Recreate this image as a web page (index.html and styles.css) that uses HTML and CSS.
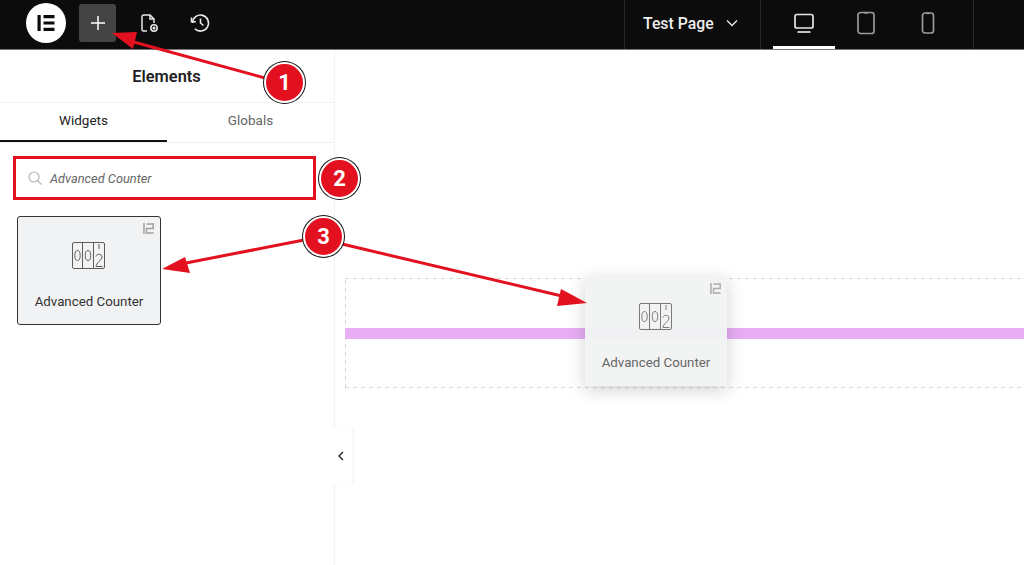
FILE: index.html
```html
<!DOCTYPE html>
<html lang="en">
<head>
<meta charset="utf-8">
<title>Elementor editor</title>
<link rel="stylesheet" href="styles.css">
</head>
<body>
<div class="app">
  <header class="topbar">
    <div class="tools">
      <div class="logo">
        <svg width="20" height="20" viewBox="0 0 20 20"><path d="M1.5 2h3.2v16H1.500zM7.500 2h11v3.200h-11zM7.500 8.400h11v3.200h-11zM7.500 14.800h11V18h-11z" fill="#0c0c0c"/></svg>
      </div>
      <div class="tool tool-active">
        <svg width="18" height="18" viewBox="0 0 18 18"><path d="M9 2v14M2 9h14" stroke="#fff" stroke-width="1.500" fill="none"/></svg>
      </div>
      <div class="tool">
        <svg width="22" height="22" viewBox="0 0 22 22" fill="none" stroke="#e8e8e8" stroke-width="1.500"><path d="M9 19H5.500A1.500 1.500 0 0 1 4 17.500v-13A1.500 1.500 0 0 1 5.500 3H12l4 4v4"/><path d="M12 3v4h4"/><circle cx="16" cy="16" r="3.200"/><circle cx="16" cy="16" r=".8" fill="#e8e8e8"/></svg>
      </div>
      <div class="tool">
        <svg width="22" height="22" viewBox="0 0 22 22" fill="none" stroke="#e8e8e8" stroke-width="1.600"><path d="M3.500 11a8 8 0 1 1 2.300 5.700"/><path d="M2.500 5.500v4.300h4.300"/><path d="M11.500 6.500V11l3 2.500"/></svg>
      </div>
    </div>
    <div class="page-name">
      <span>Test Page</span>
      <svg width="14" height="14" viewBox="0 0 14 14" fill="none" stroke="#e8e8e8" stroke-width="1.400"><path d="M2 4.500 7 9.500l5-5"/></svg>
    </div>
    <div class="devices">
      <div class="device device-active">
        <svg width="22" height="22" viewBox="0 0 22 22" fill="none" stroke="#e8e8e8" stroke-width="1.700"><rect x="2" y="2.500" width="18" height="13.500" rx="1.800"/><path d="M4.500 20h13"/></svg>
      </div>
      <div class="device">
        <svg width="20" height="24" viewBox="0 0 20 24" fill="none" stroke="#9a9a9a" stroke-width="1.700"><rect x="2" y="1.500" width="16" height="21" rx="2.500"/><path d="M8 1.800h4"/></svg>
      </div>
      <div class="device">
        <svg width="16" height="22" viewBox="0 0 16 22" fill="none" stroke="#9a9a9a" stroke-width="1.700"><rect x="2.500" y="1" width="11" height="20" rx="2.500"/><path d="M6.500 1.300h3"/></svg>
      </div>
    </div>
    <div class="bar-end"></div>
  </header>
  <div class="workspace">
    <aside class="panel">
      <h1 class="panel-title">Elements</h1>
      <nav class="tabs">
        <div class="tab tab-active">Widgets</div>
        <div class="tab">Globals</div>
      </nav>
      <div class="search">
        <svg width="16" height="16" viewBox="0 0 16 16" fill="none" stroke="#b5b5b5" stroke-width="1.200"><circle cx="7" cy="7" r="5"/><path d="m10.800 10.800 3.700 3.700"/></svg>
        <span>Advanced Counter</span>
      </div>
      <div class="widget-grid">
        <div class="widget widget-picked">
          <svg class="pro" width="11" height="11" viewBox="0 0 11 11" fill="none" stroke="#a0a0a0" stroke-width="1.500"><path d="M1 0v11M3.500 1h6.700v4.500H3.500V10h7"/></svg>
          <svg class="counter" width="34" height="30" viewBox="0 0 34 30" fill="none" stroke="#5c5c5c" stroke-width="1"><rect x=".5" y="1.500" width="32" height="26" rx="1.500"/><path d="M10.500 1.500v26M21.500 1.500v26"/><ellipse cx="5.500" cy="14.500" rx="2.700" ry="5"/><ellipse cx="16" cy="14.500" rx="2.700" ry="5"/><path d="M27 3v5M24 15.500c.5-3 6-3 6 .5 0 3-6 6-6 9.500h6.500"/></svg>
          <div class="widget-label">Advanced Counter</div>
        </div>
      </div>
    </aside>
    <main class="canvas">
      <button class="collapse" type="button" aria-label="Collapse">
        <svg width="8" height="12" viewBox="0 0 8 12" fill="none" stroke="#333" stroke-width="1.500"><path d="M6 2 2 6l4 4"/></svg>
      </button>
      <section class="dropzone">
        <div class="dropline"></div>
      </section>
      <div class="widget ghost">
        <svg class="pro" width="11" height="11" viewBox="0 0 11 11" fill="none" stroke="#ababab" stroke-width="1.500"><path d="M1 0v11M3.500 1h6.700v4.500H3.500V10h7"/></svg>
        <svg class="counter" width="34" height="30" viewBox="0 0 34 30" fill="none" stroke="#7a7a7a" stroke-width="1"><rect x=".5" y="1.500" width="32" height="26" rx="1.500"/><path d="M10.500 1.500v26M21.500 1.500v26"/><ellipse cx="5.500" cy="14.500" rx="2.700" ry="5"/><ellipse cx="16" cy="14.500" rx="2.700" ry="5"/><path d="M27 3v5M24 15.500c.5-3 6-3 6 .5 0 3-6 6-6 9.500h6.500"/></svg>
        <div class="widget-label">Advanced Counter</div>
      </div>
    </main>
  </div>
  <svg class="arrows" width="1024" height="565" viewBox="0 0 1024 565" fill="none">
    <g stroke="#e3101f" stroke-width="3">
      <path d="M265 78 130 41"/>
      <path d="M304 240 186 263"/>
      <path d="M342 244 566 297"/>
    </g>
    <g fill="#e3101f">
      <path d="M112 33 137 32 133 49z"/>
      <path d="M162 269 185 257 190 273z"/>
      <path d="M587 303 561 289 557 306z"/>
    </g>
  </svg>
  <div class="badge badge-one">1</div>
  <div class="badge badge-two">2</div>
  <div class="badge badge-three">3</div>
</div>
</body>
</html>
```

FILE: styles.css
```css
* { box-sizing: border-box; }
html, body { margin: 0; height: 100%; overflow: hidden; background: #fff; }
body { font-family: Roboto, "Liberation Sans", sans-serif; color: #1f1f1f; }
.app { position: relative; width: 1024px; height: 565px; display: flex; flex-direction: column; }

.topbar { height: 50px; flex: none; display: flex; background: #0c0c0c; border-bottom: 1px solid #777; }
.tools { width: 624px; display: flex; align-items: center; padding: 0 0 3px 26px; }
.logo { width: 40px; height: 40px; border-radius: 50%; background: #fff; display: flex; align-items: center; justify-content: center; margin-right: 13px; }
.tool { width: 37px; height: 38px; border-radius: 3px; display: flex; align-items: center; justify-content: center; margin-right: 14px; }
.tool-active { background: #444; }
.page-name { width: 136px; display: flex; align-items: center; gap: 11px; padding: 0 0 3px 18px; border-left: 1px solid #2a2a2a; font-size: 15.800px; font-weight: 500; color: #eee; }
.devices { width: 214px; display: flex; align-items: stretch; padding-left: 12px; border-left: 1px solid #2a2a2a; border-right: 1px solid #2a2a2a; }
.device { width: 62px; display: flex; align-items: center; justify-content: center; padding-bottom: 1px; border-bottom: 3px solid transparent; }
.device-active { border-bottom-color: #fff; }
.bar-end { flex: 1; }

.workspace { flex: 1; display: flex; min-height: 0; }
.panel { width: 335px; flex: none; border-right: 1px solid #f2f2f2; }
.panel-title { margin: 0; height: 52px; padding-right: 1px; display: flex; align-items: center; justify-content: center; font-size: 16.400px; font-weight: 600; color: #222; }
.tabs { display: flex; height: 41px; border-top: 1px solid #f2f2f2; border-bottom: 1px solid #f0f0f0; }
.tab { flex: 1; display: flex; align-items: center; justify-content: center; padding-bottom: 6px; font-size: 13.500px; color: #666; }
.tab-active { color: #222; border-bottom: 2px solid #111; padding-bottom: 4px; }
.search { display: flex; align-items: center; gap: 7px; height: 44px; margin: 13px 18px 16px 13px; padding-left: 11px; border: 3px solid #e3101f; font-size: 12.800px; font-style: italic; color: #666; }
.search svg { flex: none; }
.widget-grid { padding-left: 17px; }
.widget { position: relative; width: 144px; height: 109px; display: flex; flex-direction: column; align-items: center; border-radius: 3px; background: #f1f2f3; }
.widget-picked { border: 1px solid #333; padding-top: 24px; }
.pro { position: absolute; top: 6px; right: 6px; }
.counter { flex: none; }
.widget-label { margin-top: 23px; font-size: 13.300px; color: #333; }

.canvas { position: relative; flex: 1; padding: 228px 0 0 10px; }
.dropzone { height: 110px; padding: 50px 0 0; background-image:
  repeating-linear-gradient(90deg, #d6d6d6 0 4px, transparent 4px 8px),
  repeating-linear-gradient(90deg, #d6d6d6 0 4px, transparent 4px 8px),
  repeating-linear-gradient(0deg, #d6d6d6 0 4px, transparent 4px 8px);
  background-size: 100% 1px, 100% 1px, 1px 100%;
  background-position: 0 0, 0 100%, 0 0;
  background-repeat: no-repeat; }
.dropline { height: 11px; background: #e8aef5; }
.collapse { position: absolute; left: -2px; top: 378px; width: 19px; height: 56px; padding: 0 3px 0 0; border: 0; background: #fff; box-shadow: 1px 0 3px rgba(0,0,0,.05); display: flex; align-items: center; justify-content: center; }
.ghost { position: absolute; left: 250px; top: 227px; width: 142px; height: 109px; padding-top: 25px; background: rgba(241,242,243,.96); box-shadow: 0 4px 18px rgba(0,0,0,.18); color: #666; }
.ghost .widget-label { color: #666; }

.arrows { position: absolute; left: 0; top: 0; pointer-events: none; }
.badge { position: absolute; width: 41px; height: 41px; border-radius: 50%; display: flex; align-items: center; justify-content: center; background: #e3101f; border: 2px solid #fff; box-shadow: 0 0 0 1px #111; color: #fff; font-size: 22px; font-weight: 700; }
.badge-one { left: 264px; top: 62px; }
.badge-two { left: 319px; top: 158px; }
.badge-three { left: 303px; top: 216px; }
```
